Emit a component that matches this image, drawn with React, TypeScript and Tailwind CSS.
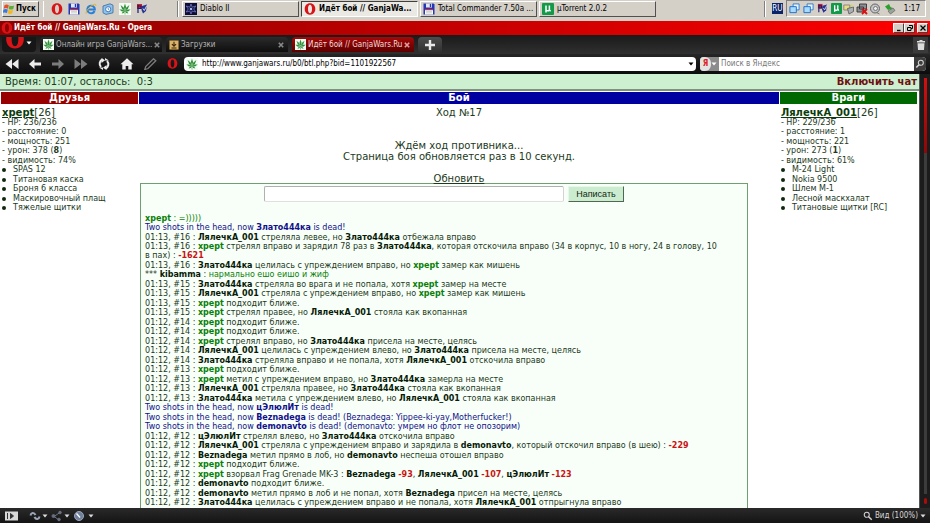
import type { ReactNode } from "react";

const UI = "font-['DejaVu_Sans_Condensed','DejaVu_Sans',sans-serif]";

/* ---------- icons ---------- */

function Opera({ className = "size-3" }: { className?: string }) {
  return (
    <svg viewBox="0 0 12 12" className={`shrink-0 ${className}`} aria-hidden="true">
      <path
        fillRule="evenodd"
        fill="#d81418"
        d="M6 .3C9.200.3 11.300 2.700 11.300 6S9.200 11.700 6 11.700.700 9.300.700 6 2.800.3 6 .3ZM6 1.700C4.700 1.700 4 3.400 4 6s.7 4.300 2 4.300S8 8.600 8 6 7.300 1.700 6 1.700Z"
      />
    </svg>
  );
}

function Leaf({ className = "size-3" }: { className?: string }) {
  return (
    <svg viewBox="0 0 12 12" className={`shrink-0 ${className}`} aria-hidden="true">
      <rect width="12" height="12" fill="#f4fbf2" />
      <g fill="#2f8f3a">
        <path d="M6 .4 7.100 4 6 8 4.900 4Z" />
        <path d="M1.600 2 4.600 4.400 6 8 3 5.800Z" />
        <path d="M10.400 2 7.400 4.400 6 8 9 5.800Z" />
        <path d="M.3 6.400 3.400 6.400 6 8 3 8.400Z" />
        <path d="M11.700 6.400 8.600 6.400 6 8 9 8.400Z" />
        <path d="M2.600 10.600 4 8.600 6 8 4.800 10Z" />
        <path d="M9.400 10.600 8 8.600 6 8 7.200 10Z" />
        <path d="M5.700 7.500h.6v4h-.6Z" />
      </g>
    </svg>
  );
}

function Floppy() {
  return (
    <svg viewBox="0 0 12 12" className="size-3 shrink-0" aria-hidden="true">
      <path d="M.5.5h10l1 1v10H.5Z" fill="#2436b8" />
      <path d="M3 .5h6v4H3Z" fill="#e4e6f4" />
      <path d="M6.800 1h1.400v3H6.800Z" fill="#2436b8" />
      <path d="M2 6.300h8v5.200H2Z" fill="#fff" />
      <path d="M2 6h8v1.200H2Z" fill="#d03030" />
      <path d="M3 8.300h6M3 9.900h6" stroke="#9aa" strokeWidth=".6" />
    </svg>
  );
}

function Explorer() {
  return (
    <svg viewBox="0 0 12 12" className="size-3 shrink-0" aria-hidden="true">
      <path d="M9.600 8A3.800 3.800 0 1 1 9.900 6.600H3.500" fill="none" stroke="#2a7fd8" strokeWidth="2" />
      <path d="M1.200 10.800C.2 9 4 3.800 8.400 1.600c2-.9 3 0 2.300 1.500" fill="none" stroke="#e8b32a" strokeWidth="1" />
    </svg>
  );
}

function Outlook() {
  return (
    <svg viewBox="0 0 12 12" className="size-3 shrink-0" aria-hidden="true">
      <path d="M1 3 8 .8l3 1.400v7.600L4 11.400 1 9.800Z" fill="#8fc3ec" stroke="#34689c" strokeWidth=".8" />
      <circle cx="6.200" cy="6.200" r="2.600" fill="#fff" stroke="#2c6cb4" strokeWidth=".9" />
      <path d="M6.200 4.600v1.700l1.200.7" fill="none" stroke="#2c6cb4" strokeWidth=".7" />
    </svg>
  );
}

function Flag({ className = "size-3" }: { className?: string }) {
  return (
    <svg viewBox="0 0 12 12" className={`shrink-0 ${className}`} aria-hidden="true">
      <path d="M1 1h5v5H1Z" fill="#c8222c" />
      <path d="M2 2v8M2 3h3v2.500H2" fill="none" stroke="#1b1b70" strokeWidth="1.200" />
      <path d="M6 3 11 1.500 10 8 7 10.500 5.500 7Z" fill="#27348f" />
      <path d="M7 5.500 8.300 7.500 10.800 2.500" fill="none" stroke="#e8e8ff" strokeWidth=".9" />
    </svg>
  );
}

function Diablo() {
  return (
    <svg viewBox="0 0 12 12" className="size-3 shrink-0" aria-hidden="true">
      <rect width="12" height="12" fill="#0c0e38" />
      <path d="M6 1 7.200 4.200 10.800 3 8.700 6 10.800 9 7.200 8 6 11 4.800 8 1.200 9 3.300 6 1.200 3 4.800 4.200Z" fill="none" stroke="#6d78c8" strokeWidth=".8" />
      <circle cx="6" cy="6" r="1.300" fill="#a8b0e8" />
    </svg>
  );
}

function MuTorrent({ className = "size-3" }: { className?: string }) {
  return (
    <svg viewBox="0 0 12 12" className={`shrink-0 ${className}`} aria-hidden="true">
      <rect width="12" height="12" rx="1" fill="#129a48" />
      <path d="M4 2.500v7M4 6.500c0 1.800 3.400 1.800 3.400 0v-4M7.400 6.500c0 1 .5 1.300 1.400 1.100" fill="none" stroke="#fff" strokeWidth="1.500" />
    </svg>
  );
}

function WindowsFlag() {
  return (
    <svg viewBox="0 0 12 12" className="size-3 shrink-0" aria-hidden="true">
      <path d="M1.500 2.200C3 1.200 4.300 1.300 5.800 2.200L5 5.700C3.600 4.900 2.300 4.900.7 5.700Z" fill="#e5502a" />
      <path d="M6.500 2.500c1.400.8 2.800.8 4.600 0l-.8 3.500c-1.600.8-3.200.8-4.600 0Z" fill="#5cae35" />
      <path d="M.5 6.500c1.500-.8 3-.8 4.300 0L4 10c-1.400-.8-2.700-.8-4.300 0Z" fill="#3c78dc" />
      <path d="M5.500 6.800c1.400.8 3 .8 4.600 0l-.8 3.500c-1.600.8-3.200.8-4.600 0Z" fill="#f2b822" />
    </svg>
  );
}

function Screens() {
  return (
    <svg viewBox="0 0 12 12" className="size-[11px] shrink-0" aria-hidden="true">
      <path d="M4.500 1h6.500v6.500H4.500Z" fill="#e8f4ff" stroke="#2a78d0" />
      <path d="M1 4h7v6.500H1Z" fill="#a8dcff" stroke="#1f6ac4" />
    </svg>
  );
}

function Network() {
  return (
    <svg viewBox="0 0 12 12" className="size-3 shrink-0" aria-hidden="true">
      <path d="M.8 2h6v5h-6Z" fill="#e6dc80" stroke="#777" strokeWidth=".8" />
      <path d="M4.500 5.500 10.500 4v4.500L6 11Z" fill="#aab0b4" stroke="#555" strokeWidth=".8" />
      <path d="M8 1.200 10.800 2.200 8 4" fill="#cddc60" />
    </svg>
  );
}

function NetworkOff() {
  return (
    <svg viewBox="0 0 12 12" className="size-3 shrink-0" aria-hidden="true">
      <path d="M3.500 1h7v5h-7ZM1 4h6.500v5H1Z" fill="#8a8f98" stroke="#333" strokeWidth=".9" />
      <path d="m6 6 5 5M11 6l-5 5" stroke="#dc1010" strokeWidth="1.800" />
    </svg>
  );
}

function Speaker() {
  return (
    <svg viewBox="0 0 12 12" className="size-3 shrink-0" aria-hidden="true">
      <circle cx="6" cy="5.500" r="4.500" fill="#c2c4c8" stroke="#666" />
      <circle cx="6.500" cy="5.500" r="2" fill="#eee" stroke="#777" />
      <path d="M7.500 9.500 10.500 11" stroke="#777" />
    </svg>
  );
}

function Eject() {
  return (
    <svg viewBox="0 0 12 12" className="size-3 shrink-0" aria-hidden="true">
      <path d="M1 3.500 5 1l1.500 3L9 5.200 4 7Z" fill="#2ca02c" />
      <path d="m4 8 5-3 2 2.500-4.500 3.500Z" fill="#9ba49b" stroke="#555" strokeWidth=".6" />
    </svg>
  );
}

function Caret({ className = "text-[#ddd]" }: { className?: string }) {
  return (
    <svg viewBox="0 0 6 4" className={`h-1 w-1.5 shrink-0 ${className}`} aria-hidden="true">
      <path d="M.5.5h5L3 3.500Z" fill="currentColor" />
    </svg>
  );
}

function Magnifier({ flipped = false }: { flipped?: boolean }) {
  return (
    <svg viewBox="0 0 12 12" className="size-2.5 shrink-0" fill="none" stroke="#d4d4d4" aria-hidden="true">
      <circle cx={flipped ? 4.5 : 7} cy="4.500" r="3" strokeWidth="1.300" />
      <path d={flipped ? "M6.700 6.800 10.500 10.500" : "M4.800 6.800 1.500 10.300"} strokeWidth="1.800" />
    </svg>
  );
}

/* ---------- Windows taskbar ---------- */

function TaskButton({ icon, children, active = false }: { icon: ReactNode; children: ReactNode; active?: boolean }) {
  const look = active
    ? "border-t-[#404040] border-l-[#404040] border-b-white border-r-white bg-[#ebe9e4] font-bold"
    : "border-t-white border-l-white border-b-[#505050] border-r-[#505050] bg-[#d4d0c8]";
  return (
    <button className={`flex h-4 max-w-[117px] flex-1 items-center gap-[3px] border pl-0.5 text-left whitespace-nowrap ${look}`}>
      {icon}
      <span>{children}</span>
    </button>
  );
}

function Taskbar() {
  return (
    <div className="flex h-[21px] shrink-0 items-center bg-[#d4d0c8] pr-1 pb-1 pl-0.5 text-[8px] leading-3 text-black">
      <button className="flex h-4 w-[37px] items-center gap-px border border-t-white border-r-[#505050] border-b-[#505050] border-l-white font-bold">
        <WindowsFlag />
        <span>Пуск</span>
      </button>
      <i className="ml-1 h-4 w-px bg-white" />
      <div className="ml-[7px] flex w-[126px] gap-[5px]">
        <Opera />
        <Floppy />
        <Explorer />
        <Outlook />
        <Leaf />
        <Flag />
      </div>
      <i className="mr-[3px] h-4 w-0.5 border-l border-[#808080] bg-white" />
      <div className="flex flex-1 gap-0.5">
        <TaskButton icon={<Diablo />}>Diablo II</TaskButton>
        <TaskButton icon={<Opera />} active>
          Идёт бой // GanjaWa...
        </TaskButton>
        <TaskButton icon={<Floppy />}>Total Commander 7.50a ...</TaskButton>
        <TaskButton icon={<MuTorrent />}>µTorrent 2.0.2</TaskButton>
      </div>
      <i className="mr-1.5 h-4 w-0.5 border-l border-[#808080] bg-white" />
      <span className="mr-[3px] w-[11px] bg-[#0a246a] text-center leading-[11px] text-white">RU</span>
      <div className="flex h-[17px] items-center gap-px border border-t-[#808080] border-r-white border-b-white border-l-[#808080] pr-[5px] pl-0.5">
        <Screens />
        <i className="w-px" />
        <Screens />
        <i className="w-px" />
        <Flag className="size-[11px]" />
        <i className="w-px" />
        <MuTorrent className="size-[11px]" />
        <Network />
        <NetworkOff />
        <Speaker />
        <i className="w-px" />
        <Eject />
        <span className="ml-[7px]">1:17</span>
      </div>
    </div>
  );
}

/* ---------- browser chrome ---------- */

function WindowButton({ label, children }: { label: string; children: ReactNode }) {
  return (
    <button
      aria-label={label}
      className="flex h-2.5 w-[11px] items-center justify-center border border-t-white border-r-[#404040] border-b-[#404040] border-l-white bg-[#d4d0c8]"
    >
      <svg viewBox="0 0 8 8" className="size-2 shrink-0" fill="none" stroke="#000" aria-hidden="true">
        {children}
      </svg>
    </button>
  );
}

function TitleBar() {
  return (
    <div className="flex h-3.5 shrink-0 items-center bg-linear-to-r from-[#8f0000] to-[#ff0000] pr-0.5 pl-px text-[8px] leading-3 font-bold text-white">
      <Opera />
      <h1 className="ml-px flex-1">Идёт бой // GanjaWars.Ru - Opera</h1>
      <WindowButton label="Свернуть">
        <path d="M2 6.500h3.500" strokeWidth="1.400" />
      </WindowButton>
      <WindowButton label="Восстановить">
        <path d="M3 1.500h3.500v3H5M1.500 3.500H5v3H1.500Z" />
      </WindowButton>
      <i className="w-0.5" />
      <WindowButton label="Закрыть">
        <path d="m1.500 1.500 5 5M6.500 1.500l-5 5" strokeWidth="1.300" />
      </WindowButton>
    </div>
  );
}

function Tab({ icon, children, active = false }: { icon: ReactNode; children: ReactNode; active?: boolean }) {
  const look = active
    ? "bg-linear-to-b from-[#a80808] to-[#5c0000] text-[#f0dcdc]"
    : "bg-linear-to-b from-[#2c2c2c] to-[#0e0e0e] text-[#b4b4b4]";
  return (
    <div className={`flex h-[15px] max-w-[122px] flex-1 items-center gap-0.5 rounded-t-sm pr-1 pl-[3px] whitespace-nowrap ${look}`}>
      {icon}
      <button className="flex-1 text-left">{children}</button>
      <button aria-label="Закрыть вкладку">
        <svg viewBox="0 0 6 6" className="size-1.5" stroke={active ? "#e0a0a0" : "#8a8a8a"} strokeWidth="1.600" aria-hidden="true">
          <path d="m.8.8 4.400 4.400M5.200.8.8 5.200" />
        </svg>
      </button>
    </div>
  );
}

function Downloads() {
  return (
    <svg viewBox="0 0 12 12" className="size-2.5 shrink-0" aria-hidden="true">
      <rect x=".5" y=".5" width="11" height="11" rx="1" fill="#d9b36c" stroke="#8a6426" />
      <path d="M6 2v5M3.500 5 6 7.500 8.500 5M3 9.500h6" fill="none" stroke="#3c2608" strokeWidth="1.300" />
    </svg>
  );
}

function TabBar() {
  return (
    <div className="flex h-[19px] shrink-0 items-start gap-1 bg-linear-to-b from-[#1a1a1a] to-[#303030] pt-0.5 pr-0.5 pl-0.5 text-[8px] leading-3">
      <button aria-label="Меню" className="flex h-[15px] w-[34px] items-start justify-between overflow-hidden rounded-b-sm bg-[#161616] pr-1 pl-[3px]">
        <Opera className="-mt-2 size-5" />
        <Caret className="mt-1 text-white" />
      </button>
      <Tab icon={<Leaf className="size-[11px]" />}>Онлайн игра GanjaWars...</Tab>
      <Tab icon={<Downloads />}>Загрузки</Tab>
      <Tab icon={<Leaf className="size-[11px]" />} active>
        Идёт бой // GanjaWars.Ru
      </Tab>
      <button aria-label="Новая вкладка" className="flex h-4 w-6 items-center justify-center rounded-sm bg-linear-to-b from-[#4c4c4c] to-[#303030]">
        <svg viewBox="0 0 10 10" className="size-2.5" aria-hidden="true">
          <path d="M3.800 0h2.400v3.800H10v2.400H6.200V10H3.800V6.200H0V3.800h3.800Z" fill="#e8e8e8" />
        </svg>
      </button>
      <span className="flex-1" />
      <button aria-label="Корзина" className="flex h-4 w-[15px] items-center justify-center bg-[#3a3a3a]">
        <svg viewBox="0 0 10 10" className="size-2.5" fill="#dcdcdc" aria-hidden="true">
          <path d="M3.500 0h3v1H9v1.600H1V1h2.500ZM1.500 3.200h7L8 10H2Z" />
        </svg>
      </button>
    </div>
  );
}

function NavButton({ label, dim = false, children }: { label: string; dim?: boolean; children: ReactNode }) {
  return (
    <button aria-label={label} className={`flex w-[23px] justify-center ${dim ? "text-[#7c7c7c]" : "text-[#ececec]"}`}>
      <svg viewBox="0 0 14 12" className="h-3 w-3.5" fill="currentColor" aria-hidden="true">
        {children}
      </svg>
    </button>
  );
}

function AddressBar() {
  return (
    <div className="flex h-5 shrink-0 items-center bg-linear-to-b from-[#262626] to-[#0c0c0c] pr-1 pb-px text-[8px] leading-3">
      <nav className="flex w-[184px] shrink-0 pl-px">
        <NavButton label="В начало">
          <path d="M7 1v10L.5 6ZM13.500 1v10L7 6Z" />
        </NavButton>
        <NavButton label="Назад">
          <path d="M6.500 1v3.500H13v3H6.500V11L1 6Z" />
        </NavButton>
        <NavButton label="Вперёд" dim>
          <path d="M7.500 1v3.500H1v3h6.500V11L13 6Z" />
        </NavButton>
        <NavButton label="В конец" dim>
          <path d="M7 1v10l6.500-5ZM.5 1v10L7 6Z" />
        </NavButton>
        <NavButton label="Обновить страницу">
          <path d="M5.500 1.500C2.500 2.500 1.700 6.500 4 9M8.500 10.500c3-1 3.800-5 1.500-7.500" fill="none" stroke="currentColor" strokeWidth="2" />
          <path d="M4.500 0 8 2.200 4.500 5ZM9.500 12 6 9.800 9.500 7ZM2 9.500h4V12ZM12 2.500H8V0Z" />
        </NavButton>
        <NavButton label="Домой">
          <path d="M7 .3 13.500 6.200H11.700V11.500H8.300V8H5.700v3.500H2.300V6.200H.5Z" />
        </NavButton>
        <NavButton label="Пароли" dim>
          <path d="M10.500.8 12.800 2.800 5 10.500 1.800 11.500 2.700 8.600Z" fill="none" stroke="currentColor" strokeWidth="1.300" />
        </NavButton>
        <button aria-label="Opera" className="flex w-[23px] justify-center">
          <Opera className="size-[11px]" />
        </button>
      </nav>
      <label className="flex h-3.5 flex-1 items-center gap-1 rounded-sm bg-white pr-0.5 pl-0.5">
        <Leaf />
        <input
          aria-label="Адрес"
          defaultValue="http://www.ganjawars.ru/b0/btl.php?bid=1101922567"
          className="h-3 min-w-0 flex-1 text-black outline-none"
        />
        <Caret className="text-black" />
      </label>
      <div className="ml-1 flex h-3.5 w-[226px] items-center overflow-hidden rounded-sm bg-white">
        <button aria-label="Поисковая система" className="flex h-3.5 w-[19px] items-center justify-between bg-[#8c8c8c] pr-0.5">
          <b className="h-3.5 w-3 rounded-r-md bg-[#e4e4e4] text-center leading-[14px] text-[#e02020]">Я</b>
          <Caret className="text-white" />
        </button>
        <input aria-label="Поиск" placeholder="Поиск в Яндекс" className="h-3 min-w-0 flex-1 pl-0.5 outline-none placeholder:text-[#777]" />
        <button aria-label="Найти" className="flex h-3.5 w-3 items-center justify-center bg-[#3c3c3c]">
          <Magnifier />
        </button>
      </div>
    </div>
  );
}

/* ---------- battle page ---------- */

interface Fighter {
  name: string;
  level: number;
  hp: string;
  distance: number;
  power: number;
  damage: number;
  shots: number;
  visibility: string;
  gear: string[];
}

const friend: Fighter = {
  name: "xpept",
  level: 26,
  hp: "236/236",
  distance: 0,
  power: 251,
  damage: 378,
  shots: 8,
  visibility: "74%",
  gear: ["SPAS 12", "Титановая каска", "Броня 6 класса", "Маскировочный плащ", "Тяжелые щитки"],
};

const enemy: Fighter = {
  name: "ЛялечкА_001",
  level: 26,
  hp: "229/236",
  distance: 1,
  power: 221,
  damage: 273,
  shots: 1,
  visibility: "61%",
  gear: ["M-24 Light", "Nokia 9500", "Шлем M-1", "Лесной маскхалат", "Титановые щитки [RC]"],
};

function FighterCard({ fighter }: { fighter: Fighter }) {
  return (
    <div className="pt-[3px] pl-px whitespace-nowrap">
      <p className="text-[10px] leading-[11px]">
        <a href="#fighter" className="font-bold text-[#0c3c0c] underline">
          {fighter.name}
        </a>
        [{fighter.level}]
      </p>
      <ul className="text-[8px] leading-[9px] [&>li:nth-child(even)]:pb-px">
        <li>- HP: {fighter.hp}</li>
        <li>- расстояние: {fighter.distance}</li>
        <li>- мощность: {fighter.power}</li>
        <li>
          - урон: {fighter.damage} (<b>{fighter.shots}</b>)
        </li>
        <li>- видимость: {fighter.visibility}</li>
        {fighter.gear.map((item) => (
          <li key={item} className="flex items-center gap-[7px]">
            <i className="size-1 rounded-full bg-[#102810]" />
            {item}
          </li>
        ))}
      </ul>
    </div>
  );
}

const X = () => <b className="text-[#088008]">xpept</b>;
const Z = () => <b className="text-[#061a06]">Злато444ка</b>;
const L = () => <b className="text-[#061a06]">ЛялечкА_001</b>;
const B = ({ children }: { children: ReactNode }) => <b className="text-[#061a06]">{children}</b>;
const Hit = ({ children }: { children: ReactNode }) => <b className="text-[#c81414]">{children}</b>;
const Kill = ({ who, children }: { who: string; children?: ReactNode }) => (
  <span className="text-[#10108c]">
    Two shots in the head, now <b>{who}</b> is dead!{children}
  </span>
);

const log: ReactNode[] = [
  <span className="text-[#088008]"><X /> : =)))))</span>,
  <Kill who="Злато444ка" />,
  <>01:13, #16 : <L /> стреляла левее, но <Z /> отбежала вправо</>,
  <>01:13, #16 : <X /> стрелял вправо и зарядил 78 раз в <Z />, которая отскочила вправо (34 в корпус, 10 в ногу, 24 в голову, 10 в&nbsp;пах) : <Hit>-1621</Hit></>,
  <>01:13, #16 : <Z /> целилась с упреждением вправо, но <X /> замер как мишень</>,
  <>*** <B>kibamma</B> : <span className="text-[#088008]">нармально ешо еишо и жиф</span></>,
  <>01:13, #15 : <Z /> стреляла во врага и не попала, хотя <X /> замер на месте</>,
  <>01:13, #15 : <L /> стреляла с упреждением вправо, но <X /> замер как мишень</>,
  <>01:13, #15 : <X /> подходит ближе.</>,
  <>01:13, #15 : <X /> стрелял правее, но <L /> стояла как вкопанная</>,
  <>01:12, #14 : <X /> подходит ближе.</>,
  <>01:12, #14 : <X /> подходит ближе.</>,
  <>01:12, #14 : <X /> стрелял вправо, но <Z /> присела на месте, целясь</>,
  <>01:12, #14 : <L /> целилась с упреждением влево, но <Z /> присела на месте, целясь</>,
  <>01:12, #14 : <Z /> стреляла вправо и не попала, хотя <L /> отскочила вправо</>,
  <>01:12, #13 : <X /> подходит ближе.</>,
  <>01:12, #13 : <X /> метил с упреждением вправо, но <Z /> замерла на месте</>,
  <>01:12, #13 : <L /> стреляла правее, но <Z /> стояла как вкопанная</>,
  <>01:12, #13 : <Z /> метила с упреждением влево, но <L /> стояла как вкопанная</>,
  <Kill who="цЭлюлИт" />,
  <Kill who="Beznadega"> (Beznadega: Yippee-ki-yay,Motherfucker!)</Kill>,
  <Kill who="demonavto"> (demonavto: умрем но флот не опозорим)</Kill>,
  <>01:12, #12 : <B>цЭлюлИт</B> стрелял влево, но <Z /> отскочила вправо</>,
  <>01:12, #12 : <L /> стреляла с упреждением вправо и зарядила в <B>demonavto</B>, который отскочил вправо (в шею) : <Hit>-229</Hit></>,
  <>01:12, #12 : <B>Beznadega</B> метил прямо в лоб, но <B>demonavto</B> неспеша отошел вправо</>,
  <>01:12, #12 : <X /> подходит ближе.</>,
  <>01:12, #12 : <X /> взорвал Frag Grenade MK-3 : <B>Beznadega</B> <Hit>-93</Hit>, <L /> <Hit>-107</Hit>, <B>цЭлюлИт</B> <Hit>-123</Hit></>,
  <>01:12, #12 : <B>demonavto</B> подходит ближе.</>,
  <>01:12, #12 : <B>demonavto</B> метил прямо в лоб и не попал, хотя <B>Beznadega</B> присел на месте, целясь</>,
  <>01:12, #12 : <Z /> целилась с упреждением вправо и не попала, хотя <L /> отпрыгнула вправо</>,
  <>*** <B>kibamma</B> :</>,
];

function ColumnHead({ color, children }: { color: string; children: ReactNode }) {
  return <h2 className={`h-3 text-center text-[10px] leading-3 font-bold text-white ${color}`}>{children}</h2>;
}

function BattlePage() {
  return (
    <main className="min-w-0 flex-1 overflow-hidden bg-white font-['DejaVu_Sans',Verdana,sans-serif] text-[#1c3a1c]">
      <div className="flex h-[17px] items-center justify-between border-b-2 border-[#7f917f] bg-[#ccf0d0] pr-0.5 pl-[5px] text-[10px] leading-3">
        <span className="whitespace-pre">Время: 01:07, осталось:&nbsp; 0:3</span>
        <a href="#chat" className="font-bold text-[#701010]">
          Включить чат
        </a>
      </div>
      <div className="grid grid-cols-[15fr_70fr_15fr] gap-x-px pt-px pr-0.5 pl-px">
        <section>
          <ColumnHead color="bg-[#980000]">Друзья</ColumnHead>
          <FighterCard fighter={friend} />
        </section>
        <section>
          <ColumnHead color="bg-[#0000a0]">Бой</ColumnHead>
          <div className="pt-[3px] text-center text-[10px] leading-[11px]">
            <p>Ход №17</p>
            <p className="pt-[22px]">Ждём ход противника...</p>
            <p>Страница боя обновляется раз в 10 секунд.</p>
            <a href="#refresh" className="mt-[11px] inline-block h-2.5 align-top underline">
              Обновить
            </a>
          </div>
          <div className="ml-px w-[95%] border border-[#6fa06f] bg-[#f8fff8] px-1 pt-0.5">
            <form className="flex justify-center gap-1" onSubmit={(event) => event.preventDefault()}>
              <input
                aria-label="Сообщение"
                className="h-4 w-[300px] rounded-xs border border-t-[#b0b0b0] border-r-[#d4d4d4] border-b-[#e0e0e0] border-l-[#b0b0b0] bg-white px-1 text-[9px] outline-none"
              />
              <button className="h-4 border border-t-[#e8f8e8] border-r-[#506850] border-b-[#506850] border-l-[#e8f8e8] bg-[#ccecd0] px-[7px] font-['Liberation_Sans',Arial,sans-serif] text-[9px] leading-3 text-[#102810]">
                Написать
              </button>
            </form>
            <ul className="pt-3 text-[8px] leading-[9px] [&>li:nth-child(even)]:pb-px">
              {log.map((line, index) => (
                <li key={index}>{line}</li>
              ))}
            </ul>
          </div>
        </section>
        <section>
          <ColumnHead color="bg-[#006800]">Враги</ColumnHead>
          <FighterCard fighter={enemy} />
        </section>
      </div>
    </main>
  );
}

function Scrollbar() {
  return (
    <div className="flex w-[11px] shrink-0 flex-col items-center border-l border-[#555] bg-[#1c1c1c] pt-1 pb-1">
      <i className="h-[75px] w-[3px] bg-linear-to-b from-[#d01010] to-[#8c0808]" />
      <i className="w-[3px] flex-1 bg-[#3c3c3c]" />
      <i className="mt-1 h-1.5 w-[3px] rounded-full bg-[#a80c0c]" />
    </div>
  );
}

function StatusBar() {
  return (
    <div className="flex h-[15px] shrink-0 items-center justify-between bg-linear-to-b from-[#2a2a2a] to-[#141414] pr-1 pl-[5px] text-[8px] leading-3 text-[#d8d8d8]">
      <div className="flex items-center gap-[3px]">
        <button aria-label="Панели" className="mr-2">
          <svg viewBox="0 0 13 10" className="h-2.5 w-[13px]" aria-hidden="true">
            <rect width="13" height="9" y=".5" fill="#d8d8d8" />
            <path d="M2.500 2v6M5.500 2.500v5L8.500 5Z" fill="#333" stroke="#333" />
          </svg>
        </button>
        <button aria-label="Синхронизация" className="flex items-center gap-px">
          <svg viewBox="0 0 12 12" className="size-3" fill="none" stroke="#9aa6b8" strokeWidth="2" aria-hidden="true">
            <path d="M1.500 5.500C2 2.500 5 2 6.500 5M10.500 6.500C10 9.500 7 10 5.500 7" />
          </svg>
          <Caret />
        </button>
        <button aria-label="Unite" className="flex items-center gap-px">
          <svg viewBox="0 0 12 12" className="size-3" stroke="#667080" fill="#667080" aria-hidden="true">
            <path d="M3 6.500 9 2.500M3 6.500 8 10" />
            <circle cx="2.500" cy="6" r="1.500" />
            <circle cx="9" cy="2.500" r="1.300" />
            <circle cx="8" cy="9.500" r="1.300" />
          </svg>
          <Caret />
        </button>
        <button aria-label="Turbo" className="flex items-center gap-[3px]">
          <svg viewBox="0 0 12 12" className="size-3" aria-hidden="true">
            <circle cx="6" cy="6" r="4.500" fill="#70809c" stroke="#9aa8bc" />
            <path d="m3.500 3.500 3.500 4" stroke="#fff" strokeWidth="1.300" />
          </svg>
          <Caret />
        </button>
      </div>
      <button className="flex items-center gap-0.5">
        <Magnifier flipped />
        <span>Вид (100%)</span>
        <Caret />
      </button>
    </div>
  );
}

export default function App() {
  return (
    <div className={`flex h-screen flex-col overflow-hidden bg-[#1c1c1c] ${UI}`}>
      <Taskbar />
      <TitleBar />
      <TabBar />
      <AddressBar />
      <div className="flex min-h-0 flex-1">
        <BattlePage />
        <Scrollbar />
      </div>
      <StatusBar />
    </div>
  );
}
